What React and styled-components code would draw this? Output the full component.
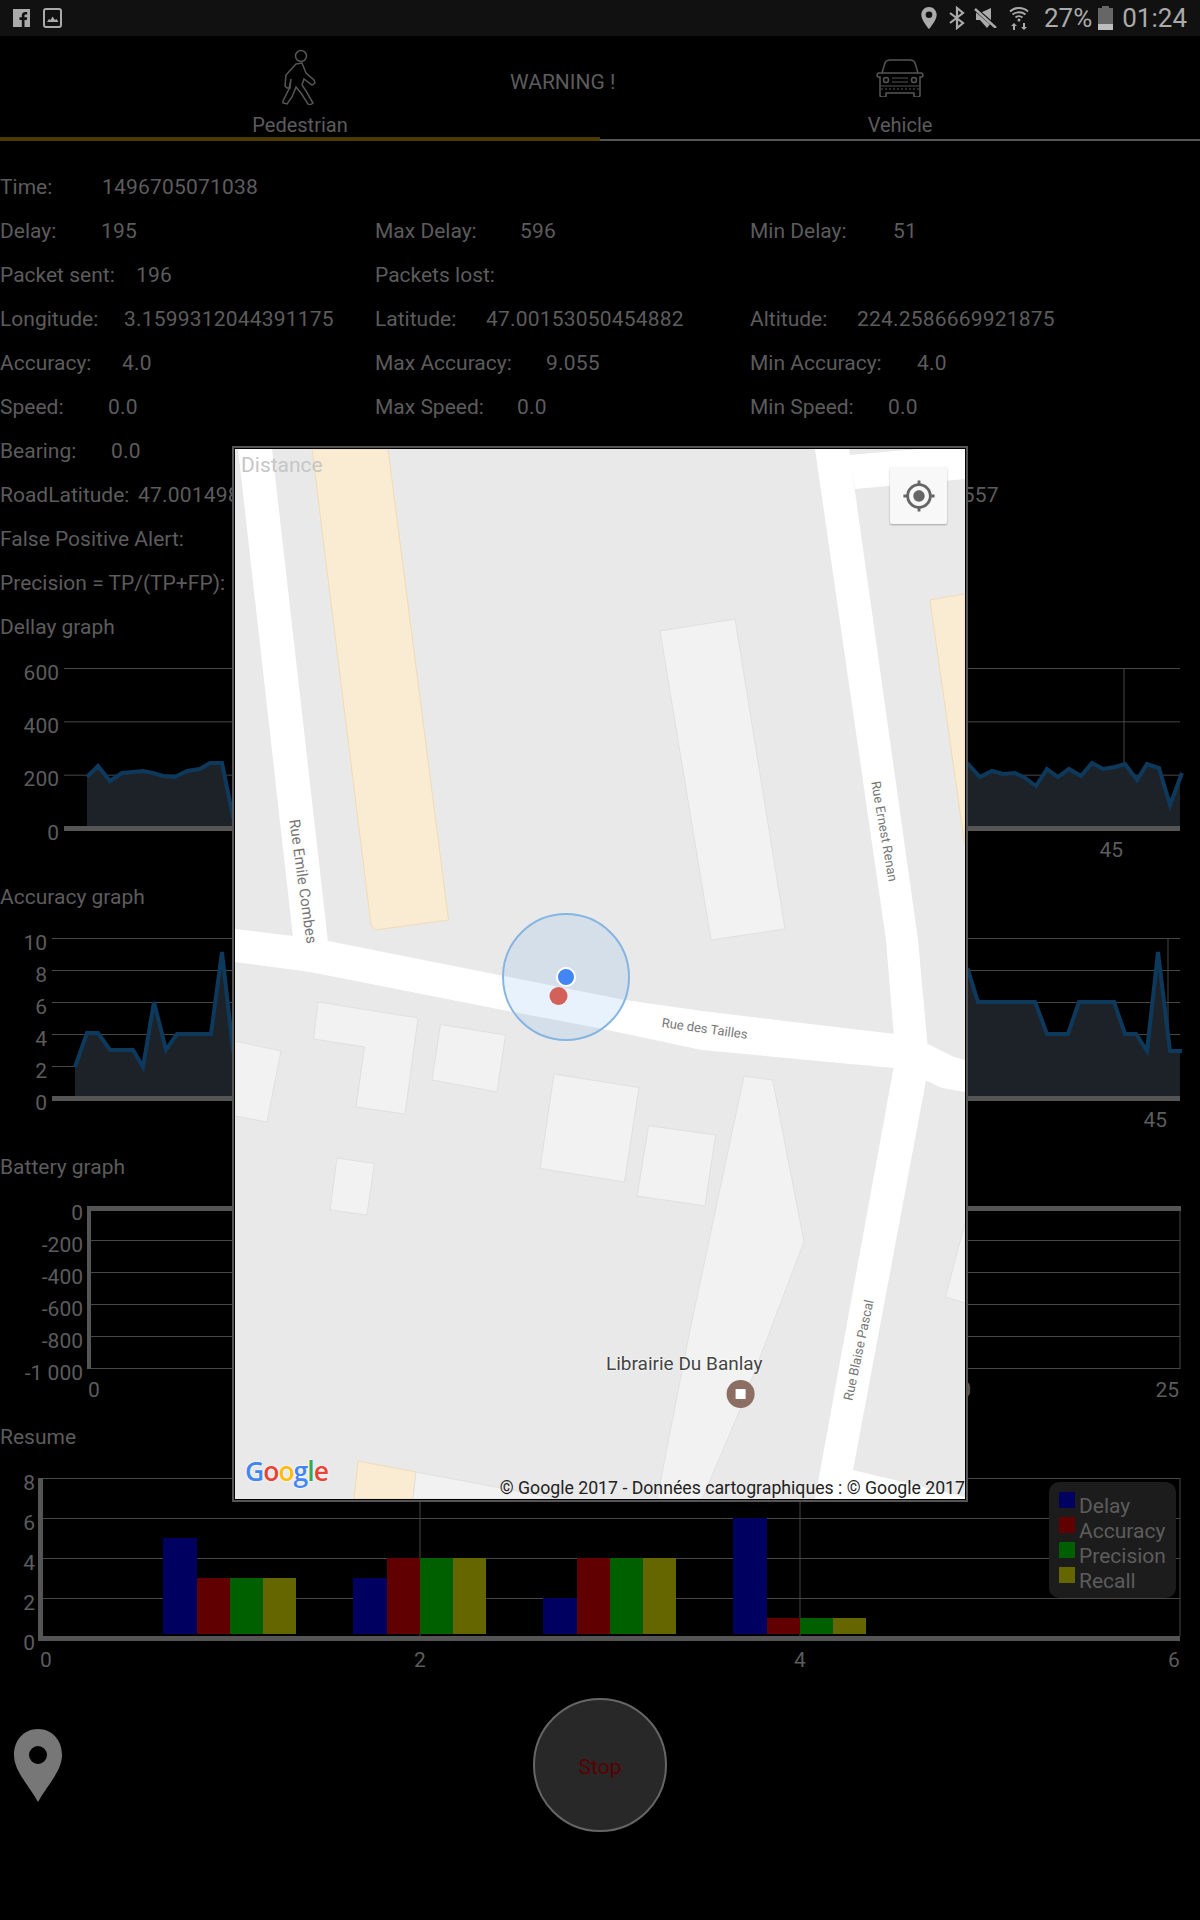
import React from "react";
import styled, { createGlobalStyle } from "styled-components";

const TEXT = "#5c5c5c";
const GRID = "#474747";
const AXIS = "#555";

// label, value, x of the value inside its column
const INFO_ROWS = [
  [["Time:", "1496705071038", 102]],
  [["Delay:", "195", 101], ["Max Delay:", "596", 145], ["Min Delay:", "51", 143]],
  [["Packet sent:", "196", 136], ["Packets lost:", "", 0]],
  [["Longitude:", "3.1599312044391175", 124], ["Latitude:", "47.00153050454882", 111], ["Altitude:", "224.2586669921875", 107]],
  [["Accuracy:", "4.0", 122], ["Max Accuracy:", "9.055", 171], ["Min Accuracy:", "4.0", 167]],
  [["Speed:", "0.0", 108], ["Max Speed:", "0.0", 142], ["Min Speed:", "0.0", 138]],
  [["Bearing:", "0.0", 111]],
  [["RoadLatitude:", "47.00149823", 138], ["", "", 0], ["RoadLongitude:", "3.1599557", 147]],
  [["False Positive Alert:", "", 0]],
  [["Precision = TP/(TP+FP):", "", 0]],
];

const DELAY_LINE = [
  [87, 128], [98, 117], [110, 132], [122, 124], [133, 123], [143, 122], [153, 124], [163, 127], [175, 128],
  [187, 122], [200, 120], [210, 114], [222, 114], [233, 168], [968, 115], [980, 128], [992, 122], [1003, 125],
  [1015, 124], [1025, 129], [1036, 137], [1047, 120], [1058, 128], [1069, 120], [1081, 127], [1092, 114],
  [1103, 120], [1115, 118], [1125, 115], [1137, 131], [1147, 115], [1159, 119], [1170, 156], [1182, 124],
];

const ACCURACY_LINE = [
  [75, 148], [87, 114], [98, 114], [110, 131], [133, 131], [143, 148], [154, 83], [166, 131], [177, 115],
  [211, 115], [222, 33], [233, 131], [968, 51], [978, 83], [1035, 83], [1047, 115], [1068, 115], [1079, 83],
  [1114, 83], [1125, 115], [1136, 115], [1147, 132], [1158, 33], [1170, 132], [1182, 132],
];

const BAR_COLORS = ["#000060", "#600000", "#006000", "#666600"];
const BAR_OFFSETS = [0, 34, 67, 100, 133];
const BAR_GROUPS = [
  { x: 163, values: [5, 3, 3, 3] },
  { x: 353, values: [3, 4, 4, 4] },
  { x: 543, values: [2, 4, 4, 4] },
  { x: 733, values: [6, 1, 1, 1] },
];
const LEGEND = ["Delay", "Accuracy", "Precision", "Recall"];

const GGL = [
  ["G", "#4285f4"], ["o", "#ea4335"], ["o", "#fbbc05"], ["g", "#4285f4"], ["l", "#34a853"], ["e", "#ea4335"],
];

function LineChart({ labels, labelRight, startX, line, xLine, xLabelRight }) {
  const points = line.map((p) => p.join(",")).join(" ");
  const area = `${line[0][0]},177 ${points} 1180,177`;
  return (
    <ChartSvg viewBox="0 0 1200 226">
      <defs>
        <clipPath id={`clip-${startX}`}>
          <rect x="0" y="0" width="1180" height="226" />
        </clipPath>
      </defs>
      {labels.map((l, i) => {
        const y = 19.5 + (i * 160) / (labels.length - 1);
        return (
          <g key={l}>
            {i < labels.length - 1 && <line x1={startX} x2="1180" y1={y} y2={y} stroke={GRID} strokeWidth="1" />}
            <AxisText x={labelRight} y={y + 11} textAnchor="end">{l}</AxisText>
          </g>
        );
      })}
      <line x1={xLine} x2={xLine} y1="19" y2="177" stroke={GRID} strokeWidth="1" />
      <polygon points={area} fill="#1c2228" clipPath={`url(#clip-${startX})`} />
      <polyline points={points} fill="none" stroke="#0d3a5c" strokeWidth="4" />
      <rect x={startX} y="177" width={1180 - startX} height="5" fill={AXIS} />
      <AxisText x={xLabelRight} y="207.5" textAnchor="end">45</AxisText>
    </ChartSvg>
  );
}

function BatteryChart() {
  const labels = ["0", "-200", "-400", "-600", "-800", "-1 000"];
  return (
    <ChartSvg viewBox="0 0 1200 226">
      {labels.map((l, i) => {
        const y = 19.5 + i * 32;
        return (
          <g key={l}>
            {i > 0 && <line x1="91" x2="1180" y1={y} y2={y} stroke={GRID} strokeWidth="1" />}
            <AxisText x="83" y={y + 11} textAnchor="end">{l}</AxisText>
          </g>
        );
      })}
      <line x1="1180" x2="1180" y1="19" y2="180" stroke={GRID} strokeWidth="1" />
      <rect x="87" y="17" width="1094" height="5" fill={AXIS} />
      <rect x="87" y="17" width="4" height="163" fill={AXIS} />
      <AxisText x="88" y="207.5">0</AxisText>
      <AxisText x="971" y="207.5" textAnchor="end">20</AxisText>
      <AxisText x="1179" y="207.5" textAnchor="end">25</AxisText>
    </ChartSvg>
  );
}

function ResumeChart() {
  return (
    <ChartSvg viewBox="0 0 1200 226">
      {["8", "6", "4", "2", "0"].map((l, i) => {
        const y = 19.5 + i * 40;
        return (
          <g key={l}>
            {i < 4 && <line x1="43" x2="1180" y1={y} y2={y} stroke={GRID} strokeWidth="1" />}
            <AxisText x="35" y={y + 11} textAnchor="end">{l}</AxisText>
          </g>
        );
      })}
      <line x1="420" x2="420" y1="19" y2="177" stroke={GRID} strokeWidth="1" />
      <line x1="800" x2="800" y1="19" y2="177" stroke={GRID} strokeWidth="1" />
      <line x1="1180" x2="1180" y1="19" y2="177" stroke={GRID} strokeWidth="1" />
      {BAR_GROUPS.map((group) =>
        group.values.map((v, i) => (
          <rect
            key={`${group.x}-${i}`}
            x={group.x + BAR_OFFSETS[i]}
            y={179 - v * 20}
            width={BAR_OFFSETS[i + 1] - BAR_OFFSETS[i]}
            height={v * 20 - 4}
            fill={BAR_COLORS[i]}
          />
        ))
      )}
      <rect x="38" y="177" width="1142" height="5" fill={AXIS} />
      <rect x="38" y="19" width="5" height="160" fill={AXIS} />
      <AxisText x="46" y="207.5" textAnchor="middle">0</AxisText>
      <AxisText x="420" y="207.5" textAnchor="middle">2</AxisText>
      <AxisText x="800" y="207.5" textAnchor="middle">4</AxisText>
      <AxisText x="1174" y="207.5" textAnchor="middle">6</AxisText>
    </ChartSvg>
  );
}

function MapDrawing() {
  return (
    <MapSvg viewBox="235 449 730 1050">
      <rect x="235" y="449" width="730" height="1050" fill="#e9e9e9" />

      {/* buildings */}
      <g fill="#faecd3" stroke="#f0dcb4" strokeWidth="1">
        <polygon points="312,449 388,449 448.5,920 375,930 371,925" />
        <polygon points="930,600 965,594 965,843 964,840" />
        <polygon points="358,1461 416,1472 413,1499 354,1499" />
      </g>
      <g fill="#f2f2f2" stroke="#e0e0e0" strokeWidth="1">
        <polygon points="660,631 735,619 785,929 711,940" />
        <polygon points="318,1002 418,1018 405,1114 356,1107 364.5,1047 313.5,1039" />
        <polygon points="440.5,1024.5 505.6,1035 497,1092 432,1080" />
        <polygon points="235,1041 281,1051 267,1122 235,1116" />
        <polygon points="554,1074 639,1087.5 624.5,1182 540,1168.5" />
        <polygon points="648.6,1125.7 715.6,1135 705,1206 637,1196" />
        <polygon points="337,1158 374.4,1163.4 367,1215 330,1210" />
        <polygon points="744,1076 772.7,1080 804,1241.6 740,1410 702,1499 657,1499 690,1330" />
        <polygon points="965,1223 945.4,1297 965,1303" />
        <polygon points="416,1472 560,1499 413,1499" />
      </g>

      {/* roads */}
      <g fill="#fff">
        <polygon points="238,449 272,449 328,942 293,937" />
        <polygon points="235,929 293,936 328,941 494,974 625,1000 702,1011 895,1034 928,1044 954,1057 965,1060 965,1092 942,1088 927,1081 894,1068 702,1050 598,1028 508,1011 310,972 235,962" />
        <polygon points="815,449 849,449 918,940 928,1050 895,1050 886,940" />
        <polygon points="895,1060 927,1075 853,1470 965,1497 965,1499 815,1499" />
        <polygon points="849,455 965,445 965,479 855,489" />
      </g>

      {/* accuracy circle and markers */}
      <circle cx="566" cy="977" r="63" fill="rgba(110,175,235,0.17)" stroke="#85b5e0" strokeWidth="2" />
      <circle cx="566" cy="977" r="9" fill="#4285f4" stroke="#fff" strokeWidth="2" />
      <circle cx="558.5" cy="996" r="9" fill="#d4605a" />
      <circle cx="740.6" cy="1394" r="14" fill="#8d6e63" />
      <rect x="735.6" y="1389" width="10" height="10" fill="#fff" />

      <RoadLabel $size={15} transform="translate(298,882) rotate(82)" textAnchor="middle">Rue Emile Combes</RoadLabel>
      <RoadLabel $size={13} transform="translate(880,832) rotate(80)" textAnchor="middle">Rue Ernest Renan</RoadLabel>
      <RoadLabel $size={13} transform="translate(704,1033) rotate(8)" textAnchor="middle">Rue des Tailles</RoadLabel>
      <RoadLabel $size={13} transform="translate(863,1351) rotate(-78)" textAnchor="middle">Rue Blaise Pascal</RoadLabel>
    </MapSvg>
  );
}

export default function App() {
  return (
    <>
      <GlobalStyle />
      <Page>
        <StatusBar>
          <StatusGroup>
            <FacebookIcon viewBox="0 0 17 18">
              <path fillRule="evenodd" d="M0 0h17v18H0zM11.5 18v-7h2.3l.4-2.7h-2.7V6.7c0-.8.2-1.3 1.3-1.3h1.4V3c-.3 0-1.1-.1-2-.1-2 0-3.4 1.2-3.4 3.5v1.9H6.5V11h2.3v7z" />
            </FacebookIcon>
            <PictureIcon viewBox="0 0 19 20">
              <rect x="1" y="1" width="17" height="18" rx="2" fill="none" stroke="#aaa" strokeWidth="2" />
              <path d="M4 14l2-3 1.5 1L9.5 8.5 12 12l1.5-1 2 3z" fill="#aaa" />
            </PictureIcon>
          </StatusGroup>
          <StatusGroup>
            <StatusSvg viewBox="5 2 14 20" width="16" height="22" $left={0}>
              <path fill="#aaa" d="M12 2C8.13 2 5 5.13 5 9c0 5.25 7 13 7 13s7-7.75 7-13c0-3.87-3.13-7-7-7zm0 10a3 3 0 0 1 0-6 3 3 0 0 1 0 6z" />
            </StatusSvg>
            <StatusSvg viewBox="0 0 16 24" width="16" height="24" $left={12}>
              <path d="M1 7l13 10-6 5V2l6 5L1 17" fill="none" stroke="#aaa" strokeWidth="2.2" />
            </StatusSvg>
            <StatusSvg viewBox="0 0 23 20" width="23" height="20" $left={9}>
              <path fill="#aaa" d="M6 5l11-5v15L13 20 6 12H2V5z" />
              <path d="M0 0l22 19" stroke="#111" strokeWidth="4" />
              <path d="M1 1l21 19" stroke="#aaa" strokeWidth="2.5" />
            </StatusSvg>
            <StatusSvg viewBox="0 0 20 24" width="20" height="24" $left={12}>
              <g fill="none" stroke="#aaa" strokeWidth="1.8">
                <path d="M1 5.5C6 .8 14 .8 19 5.5" />
                <path d="M3.5 8.5c3.5-3 9.5-3 13 0" />
                <path d="M6.5 11.5c2-1.5 5-1.5 7 0" />
              </g>
              <circle cx="10" cy="14" r="1.5" fill="#aaa" />
              <path fill="#aaa" d="M4 24v-4H2l3-3 3 3H6v4zM14 17v4h-2l3 3 3-3h-2v-4z" />
            </StatusSvg>
            <StatusText $left={15}>27%</StatusText>
            <Battery />
            <StatusText $left={9}>01:24</StatusText>
          </StatusGroup>
        </StatusBar>

        <Tabs>
          <Tab $active>
            <TabIcon viewBox="0 0 36 56" width="36" height="56" $gap={8}>
              <circle cx="19" cy="7" r="5.5" />
              <path d="M14 15l6-1 4 10 8 7 1 3-3 2-8-6-2 6 4 6 7 12-3 2-2-1-7-11-5-6-4 10-5 7-4-1v-2l6-12 2-10-1 9-3 0-2-2 1-11z" />
            </TabIcon>
            <TabLabel>Pedestrian</TabLabel>
          </Tab>
          <Tab>
            <TabIcon viewBox="0 0 48 38" width="48" height="38" $gap={16}>
              <path d="M6 14L9 4q1-3 5-3h20q4 0 5 3l3 10h3q2 0 2 3l-1 1h-2v18q0 2-2 2h-4v-4H10v4H6q-2 0-2-2V18H2l-1-1q0-3 2-3z" />
              <path d="M6 14h36" />
              <circle cx="10" cy="21" r="2.5" />
              <circle cx="38" cy="21" r="2.5" />
              <path d="M16 19h16M16 23h16M5 27h38" strokeWidth="1" />
              <path d="M5 30h38" strokeWidth="1" strokeDasharray="2 2" />
            </TabIcon>
            <TabLabel>Vehicle</TabLabel>
          </Tab>
          <Warning>WARNING !</Warning>
        </Tabs>

        <InfoList>
          {INFO_ROWS.map((row, i) => (
            <InfoRow key={i}>
              {row.map(([label, value, at], j) => (
                <InfoCell key={j}>
                  <InfoLabel $width={at}>{label}</InfoLabel>
                  <InfoValue>{value}</InfoValue>
                </InfoCell>
              ))}
            </InfoRow>
          ))}
        </InfoList>

        <ChartTitle>Dellay graph</ChartTitle>
        <LineChart
          labels={["600", "400", "200", "0"]}
          labelRight={59}
          startX={64}
          line={DELAY_LINE}
          xLine={1124}
          xLabelRight={1123}
        />
        <ChartTitle>Accuracy graph</ChartTitle>
        <LineChart
          labels={["10", "8", "6", "4", "2", "0"]}
          labelRight={47}
          startX={52}
          line={ACCURACY_LINE}
          xLine={1168}
          xLabelRight={1167}
        />
        <ChartTitle>Battery graph</ChartTitle>
        <BatteryChart />
        <ChartTitle>Resume</ChartTitle>
        <ResumeBox>
          <ResumeChart />
          <Legend>
            {LEGEND.map((name, i) => (
              <LegendRow key={name}>
                <Swatch $color={BAR_COLORS[i]} />
                <LegendLabel>{name}</LegendLabel>
              </LegendRow>
            ))}
          </Legend>
        </ResumeBox>

        <Footer>
          <PinIcon viewBox="0 0 48 73">
            <path
              fillRule="evenodd"
              d="M24 0C10 0 0 11 0 26c0 16 14 29 24 47 10-18 24-31 24-47C48 11 38 0 24 0zm0 17a9 9 0 1 1 0 18 9 9 0 0 1 0-18z"
            />
          </PinIcon>
          <StopButton>Stop</StopButton>
        </Footer>

        <MapDialog>
          <MapFrame>
            <MapDrawing />
            <DialogTitle>Distance</DialogTitle>
            <LocateButton>
              <svg viewBox="0 0 24 24" width="34" height="34" fill="#666">
                <path d="M12 8c-2.21 0-4 1.79-4 4s1.79 4 4 4 4-1.79 4-4-1.79-4-4-4zm8.94 3c-.46-4.17-3.77-7.48-7.94-7.94V1h-2v2.06C6.83 3.52 3.52 6.83 3.06 11H1v2h2.06c.46 4.17 3.77 7.48 7.94 7.94V23h2v-2.06c4.17-.46 7.48-3.77 7.94-7.94H23v-2h-2.06zM12 19c-3.87 0-7-3.13-7-7s3.13-7 7-7 7 3.13 7 7-3.13 7-7 7z" />
              </svg>
            </LocateButton>
            <PoiLabel>Librairie Du Banlay</PoiLabel>
            <GoogleLogo>
              {GGL.map(([ch, color], i) => (
                <GoogleLetter key={i} $color={color}>{ch}</GoogleLetter>
              ))}
            </GoogleLogo>
            <Attribution>© Google 2017 - Données cartographiques : © Google 2017</Attribution>
          </MapFrame>
        </MapDialog>
      </Page>
    </>
  );
}

const GlobalStyle = createGlobalStyle`
  html, body {
    margin: 0;
    padding: 0;
    background: #000;
  }
`;

const Page = styled.div`
  position: relative;
  width: 1200px;
  height: 1920px;
  overflow: hidden;
  background: #000;
  color: ${TEXT};
  font-family: Roboto, "Liberation Sans", sans-serif;
  font-size: 21px;
`;

const StatusBar = styled.div`
  height: 36px;
  background: #111;
  display: flex;
  align-items: center;
  justify-content: space-between;
  padding: 0 13px;
`;

const StatusGroup = styled.div`
  display: flex;
  align-items: center;
`;

const FacebookIcon = styled.svg`
  width: 17px;
  height: 18px;
  fill: #aaa;
`;

const PictureIcon = styled.svg`
  width: 19px;
  height: 20px;
  margin-left: 13px;
`;

const StatusSvg = styled.svg`
  margin-left: ${(p) => p.$left}px;
`;

const StatusText = styled.span`
  margin-left: ${(p) => p.$left}px;
  font-size: 26px;
  color: #aaa;
  line-height: 36px;
`;

const Battery = styled.div`
  position: relative;
  width: 15px;
  height: 22px;
  margin-left: 6px;
  margin-top: 2px;
  background: linear-gradient(#666 72%, #bdbdbd 72%);

  &::before {
    content: "";
    position: absolute;
    top: -2px;
    left: 4px;
    width: 7px;
    height: 2px;
    background: #666;
  }
`;

const Tabs = styled.div`
  position: relative;
  height: 105px;
  display: flex;
`;

const Tab = styled.div`
  flex: 1;
  display: flex;
  flex-direction: column;
  align-items: center;
  justify-content: flex-end;
  border-bottom: ${(p) => (p.$active ? "4px solid #4d3c00" : "2px solid #555")};
  padding-bottom: ${(p) => (p.$active ? "0" : "2px")};
`;

const TabIcon = styled.svg`
  fill: none;
  stroke: #555;
  stroke-width: 1.5;
  margin-bottom: ${(p) => p.$gap}px;
`;

const TabLabel = styled.div`
  font-size: 20px;
  line-height: 24px;
`;

const Warning = styled.div`
  position: absolute;
  left: 510px;
  top: 33px;
  line-height: 26px;
`;

const InfoList = styled.div`
  padding-top: 24px;
`;

const InfoRow = styled.div`
  display: grid;
  grid-template-columns: 375px 375px 1fr;
  height: 44px;
  align-items: center;
`;

const InfoCell = styled.div`
  display: flex;
  white-space: nowrap;
  line-height: 44px;
`;

const InfoLabel = styled.span`
  flex: none;
  min-width: ${(p) => p.$width}px;
`;

const InfoValue = styled.span`
  letter-spacing: 0.2px;
`;

const ChartTitle = styled.div`
  height: 44px;
  line-height: 44px;
`;

const ChartSvg = styled.svg`
  display: block;
  width: 1200px;
  height: 226px;
`;

const AxisText = styled.text`
  font-family: Roboto, "Liberation Sans", sans-serif;
  font-size: 21px;
  fill: ${TEXT};
`;

const ResumeBox = styled.div`
  position: relative;
`;

const Legend = styled.div`
  position: absolute;
  left: 1049px;
  top: 23px;
  width: 127px;
  height: 116px;
  box-sizing: border-box;
  padding: 10px 0 0 10px;
  border-radius: 10px;
  background: #1c1c1c;
`;

const LegendRow = styled.div`
  display: flex;
  height: 25px;
  align-items: flex-start;
`;

const Swatch = styled.div`
  width: 16px;
  height: 16px;
  background: ${(p) => p.$color};
`;

const LegendLabel = styled.span`
  margin: 2px 0 0 4px;
  line-height: 25px;
`;

const Footer = styled.div`
  display: grid;
  grid-template-columns: 533px auto;
  align-items: center;
  padding-top: 13px;
`;

const PinIcon = styled.svg`
  width: 48px;
  height: 73px;
  margin: 1px 0 0 14px;
  fill: #777;
`;

const StopButton = styled.div`
  width: 134px;
  height: 134px;
  box-sizing: border-box;
  border-radius: 50%;
  border: 2px solid #666;
  background: #282828;
  color: #5a0000;
  display: flex;
  align-items: center;
  justify-content: center;
  padding-top: 4px;
`;

const MapDialog = styled.div`
  position: absolute;
  left: 232px;
  top: 446px;
  width: 736px;
  height: 1056px;
  box-sizing: border-box;
  border: 2px solid #555;
  padding: 1px;
  background: #000;
`;

const MapFrame = styled.div`
  position: relative;
  width: 730px;
  height: 1050px;
  overflow: hidden;
`;

const MapSvg = styled.svg`
  display: block;
  width: 730px;
  height: 1050px;
`;

const RoadLabel = styled.text`
  font-family: Roboto, "Liberation Sans", sans-serif;
  font-size: ${(p) => p.$size}px;
  fill: #777;
`;

const DialogTitle = styled.div`
  position: absolute;
  left: 6px;
  top: 2px;
  font-size: 21px;
  line-height: 28px;
  color: #c6c6c6;
`;

const LocateButton = styled.div`
  position: absolute;
  left: 655px;
  top: 18px;
  width: 57px;
  height: 57px;
  display: flex;
  align-items: center;
  justify-content: center;
  border-radius: 2px;
  background: #f8f8f8;
  box-shadow: 0 1px 2px rgba(0, 0, 0, 0.3);
`;

const PoiLabel = styled.div`
  position: absolute;
  left: 371px;
  top: 903px;
  font-size: 19px;
  line-height: 24px;
  white-space: nowrap;
  color: #444;
  text-shadow: 0 0 2px #fff, 0 0 2px #fff;
`;

const GoogleLogo = styled.div`
  position: absolute;
  left: 10px;
  top: 1004px;
  font-family: "Open Sans", Roboto, sans-serif;
  font-size: 26.5px;
  font-weight: 600;
  line-height: 36px;
  letter-spacing: -1px;
  text-shadow: 0 0 2px #fff, 0 0 2px #fff;
`;

const GoogleLetter = styled.span`
  color: ${(p) => p.$color};
`;

const Attribution = styled.div`
  position: absolute;
  right: 0;
  bottom: 0;
  font-size: 17.7px;
  line-height: 22px;
  white-space: nowrap;
  color: #222;
`;
